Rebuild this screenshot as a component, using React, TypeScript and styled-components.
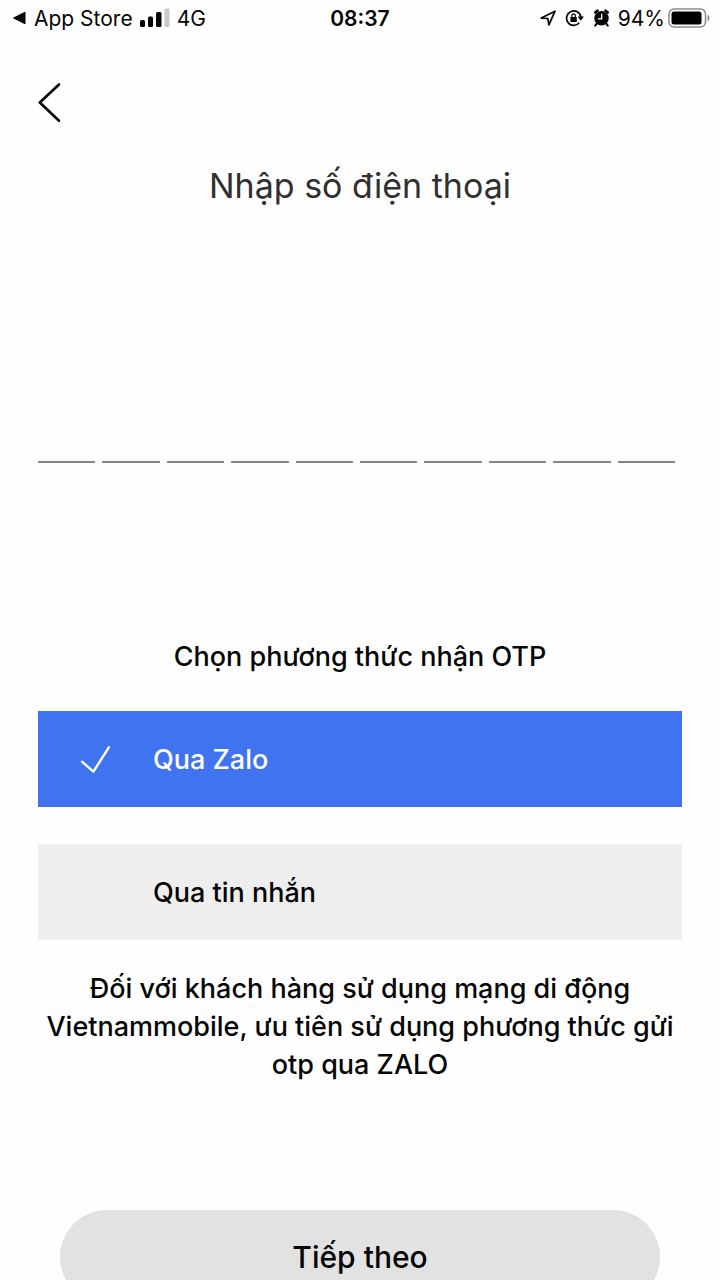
import React, { useState } from "react";
import styled, { createGlobalStyle } from "styled-components";

const GlobalStyle = createGlobalStyle`
  *, *::before, *::after { box-sizing: border-box; }
  body {
    margin: 0;
    background: #fefefe;
    color: #060606;
    font-family: Inter, "Liberation Sans", sans-serif;
  }
  button, input { font: inherit; color: inherit; }
`;

const Screen = styled.div`
  height: 100vh;
  overflow: hidden;
  display: flex;
  flex-direction: column;
`;

const StatusBar = styled.header`
  flex: none;
  display: grid;
  grid-template-columns: 1fr auto 1fr;
  align-items: center;
  height: 36px;
  padding: 0 10px;
  font-size: 21px;
  line-height: 24px;
`;

const StatusGroup = styled.div<{ $end?: boolean }>`
  display: flex;
  align-items: center;
  gap: ${(p) => (p.$end ? 8 : 7)}px;
  justify-content: ${(p) => (p.$end ? "flex-end" : "flex-start")};
  svg { flex: none; }
`;

const StatusText = styled.span`
  padding-top: 2px;
`;

const BackToApp = styled.a`
  display: flex;
  align-items: center;
  gap: 8px;
  color: inherit;
  text-decoration: none;
`;

const BatteryLevel = styled.span`
  display: flex;
  align-items: center;
  gap: 3px;
`;

const Clock = styled.time`
  padding-top: 2px;
  font-weight: 600;
`;

const NavBar = styled.nav`
  flex: none;
  display: flex;
  padding: 44px 36px 0;
`;

const BackButton = styled.button`
  display: flex;
  padding: 0;
  border: 0;
  background: none;
`;

const Title = styled.h1`
  flex: none;
  margin: 40px 0 0;
  font-size: 34px;
  line-height: 44px;
  font-weight: 400;
  text-align: center;
  color: #303030;
`;

const Form = styled.form`
  flex: none;
  display: flex;
  flex-direction: column;
  padding: 0 38px;
`;

const Digits = styled.fieldset`
  display: flex;
  min-width: 0;
  margin: 187px 0 0;
  padding: 0;
  border: 0;
`;

const Digit = styled.input`
  flex: 1;
  min-width: 0;
  height: 68px;
  margin-right: 7px;
  padding: 0;
  border: 0;
  border-bottom: 2px solid #858585;
  border-radius: 0;
  background: none;
  outline: none;
  font-size: 34px;
  text-align: center;
`;

const Methods = styled.fieldset`
  display: flex;
  flex-direction: column;
  min-width: 0;
  margin: 175px 0 0;
  padding: 0;
  border: 0;
  font-size: 27px;
  font-weight: 500;
`;

const MethodsLabel = styled.legend`
  width: 100%;
  padding: 0 0 35px;
  line-height: 38px;
  text-align: center;
`;

const Method = styled.label<{ $selected: boolean }>`
  display: flex;
  align-items: center;
  height: 96px;
  padding-left: 40px;
  background: ${(p) => (p.$selected ? "#4073f0" : "#eeeeee")};
  color: ${(p) => (p.$selected ? "#ffffff" : "#060606")};
  & + & { margin-top: 37px; }
`;

const MethodRadio = styled.input`
  appearance: none;
  width: 0;
  height: 0;
  margin: 0;
`;

const CheckSlot = styled.span`
  display: flex;
  width: 75px;
`;

const Note = styled.p`
  margin: 30px 0 0;
  font-size: 27px;
  line-height: 38px;
  font-weight: 500;
  text-align: center;
`;

const NextButton = styled.button`
  height: 94px;
  margin: 126px 22px 0;
  padding: 0;
  border: 0;
  border-radius: 47px;
  background: #e2e2e2;
  font-size: 30px;
  font-weight: 500;
`;

const SignalIcon = () => (
  <svg width="30" height="20" viewBox="0 0 30 20" aria-hidden="true">
    <rect x="0" y="12" width="5" height="7" rx="1.5" fill="#060606" />
    <rect x="8" y="8.500" width="5" height="10.500" rx="1.500" fill="#060606" />
    <rect x="16" y="4" width="5.500" height="15" rx="1.500" fill="#060606" />
    <rect x="24.500" y="0.500" width="5" height="18.500" rx="1" fill="#c9c9c9" />
  </svg>
);

const LocationIcon = () => (
  <svg width="17" height="16" viewBox="0 0 17 16" fill="none" stroke="#060606" strokeWidth="1.700" strokeLinejoin="round" aria-hidden="true">
    <path d="M1.200 8.100 15 1.200 8.900 14.800 7.800 8.500Z" />
  </svg>
);

const RotationLockIcon = () => (
  <svg width="20" height="18" viewBox="0 0 20 18" fill="none" stroke="#060606" strokeWidth="1.700" aria-hidden="true">
    <path d="M15.900 8A7.200 7.200 0 1 0 14.300 13.800" />
    <path d="M12.600 7.600h6.400l-3.200 4.200z" fill="#060606" stroke="none" />
    <rect x="5.400" y="8" width="6.400" height="5" rx=".6" fill="#060606" stroke="none" />
    <path d="M6.900 8V6.500a1.700 1.700 0 0 1 3.400 0V8" strokeWidth="1.200" />
  </svg>
);

const AlarmIcon = () => (
  <svg width="17" height="18" viewBox="0 0 17 18" aria-hidden="true">
    <circle cx="8.500" cy="9.300" r="7.200" fill="#060606" />
    <path d="M2.300 3.500 4.400 1.700M12.600 1.700l2.100 1.800" stroke="#060606" strokeWidth="2.600" strokeLinecap="round" />
    <path d="M3.900 14.300 2.200 16.600M13.100 14.300l1.700 2.300" stroke="#060606" strokeWidth="2" strokeLinecap="round" />
    <path d="M8.700 4.800v5H4.900" fill="none" stroke="#fefefe" strokeWidth="1.300" />
  </svg>
);

const BatteryIcon = () => (
  <svg width="42" height="20" viewBox="0 0 42 20" aria-hidden="true">
    <rect x="1" y="1" width="36.500" height="18" rx="5" fill="none" stroke="#8c8c8c" strokeWidth="1.500" />
    <rect x="3.500" y="3.500" width="30" height="13" rx="2.500" fill="#000000" />
    <path d="M39.500 6.800c2.700 1 2.700 5.400 0 6.400z" fill="#8c8c8c" />
  </svg>
);

const METHODS = [
  { id: "zalo", label: "Qua Zalo" },
  { id: "sms", label: "Qua tin nhắn" },
];

export default function App() {
  const [method, setMethod] = useState("zalo");

  return (
    <>
      <GlobalStyle />
      <Screen>
        <StatusBar>
          <StatusGroup>
            <BackToApp href="#app-store">
              <svg width="16" height="14" viewBox="0 0 16 14" aria-hidden="true">
                <path d="M3.500 7 15 1.200v11.600z" fill="#060606" stroke="#060606" strokeWidth="1" strokeLinejoin="round" />
              </svg>
              <StatusText>App Store</StatusText>
            </BackToApp>
            <SignalIcon />
            <StatusText>4G</StatusText>
          </StatusGroup>
          <Clock>08:37</Clock>
          <StatusGroup $end>
            <LocationIcon />
            <RotationLockIcon />
            <AlarmIcon />
            <BatteryLevel>
              <StatusText>94%</StatusText>
              <BatteryIcon />
            </BatteryLevel>
          </StatusGroup>
        </StatusBar>
        <NavBar>
          <BackButton type="button" aria-label="Quay lại">
            <svg width="26" height="44" viewBox="0 0 26 44" fill="none" stroke="#060606" strokeWidth="2.600" strokeLinecap="round" strokeLinejoin="round" aria-hidden="true">
              <path d="M23 4.500 3.800 22.500 23 40.800" />
            </svg>
          </BackButton>
        </NavBar>
        <Title>Nhập số điện thoại</Title>
        <Form onSubmit={(e) => e.preventDefault()}>
          <Digits aria-label="Số điện thoại">
            {Array.from({ length: 10 }, (_, i) => (
              <Digit key={i} inputMode="numeric" maxLength={1} aria-label={`Chữ số ${i + 1}`} />
            ))}
          </Digits>
          <Methods>
            <MethodsLabel>Chọn phương thức nhận OTP</MethodsLabel>
            {METHODS.map(({ id, label }) => (
              <Method key={id} $selected={method === id}>
                <MethodRadio type="radio" name="method" value={id} checked={method === id} onChange={() => setMethod(id)} />
                <CheckSlot>
                  {method === id && (
                    <svg width="34" height="32" viewBox="0 0 34 32" fill="none" stroke="#ffffff" strokeWidth="2.400" strokeLinecap="round" strokeLinejoin="round" aria-hidden="true">
                      <path d="M4 18.700 15.400 28.600 31 4.200" />
                    </svg>
                  )}
                </CheckSlot>
                {label}
              </Method>
            ))}
          </Methods>
          <Note>
            Đối với khách hàng sử dụng mạng di động Vietnammobile, ưu tiên sử dụng phương thức gửi otp qua ZALO
          </Note>
          <NextButton type="submit">Tiếp theo</NextButton>
        </Form>
      </Screen>
    </>
  );
}
